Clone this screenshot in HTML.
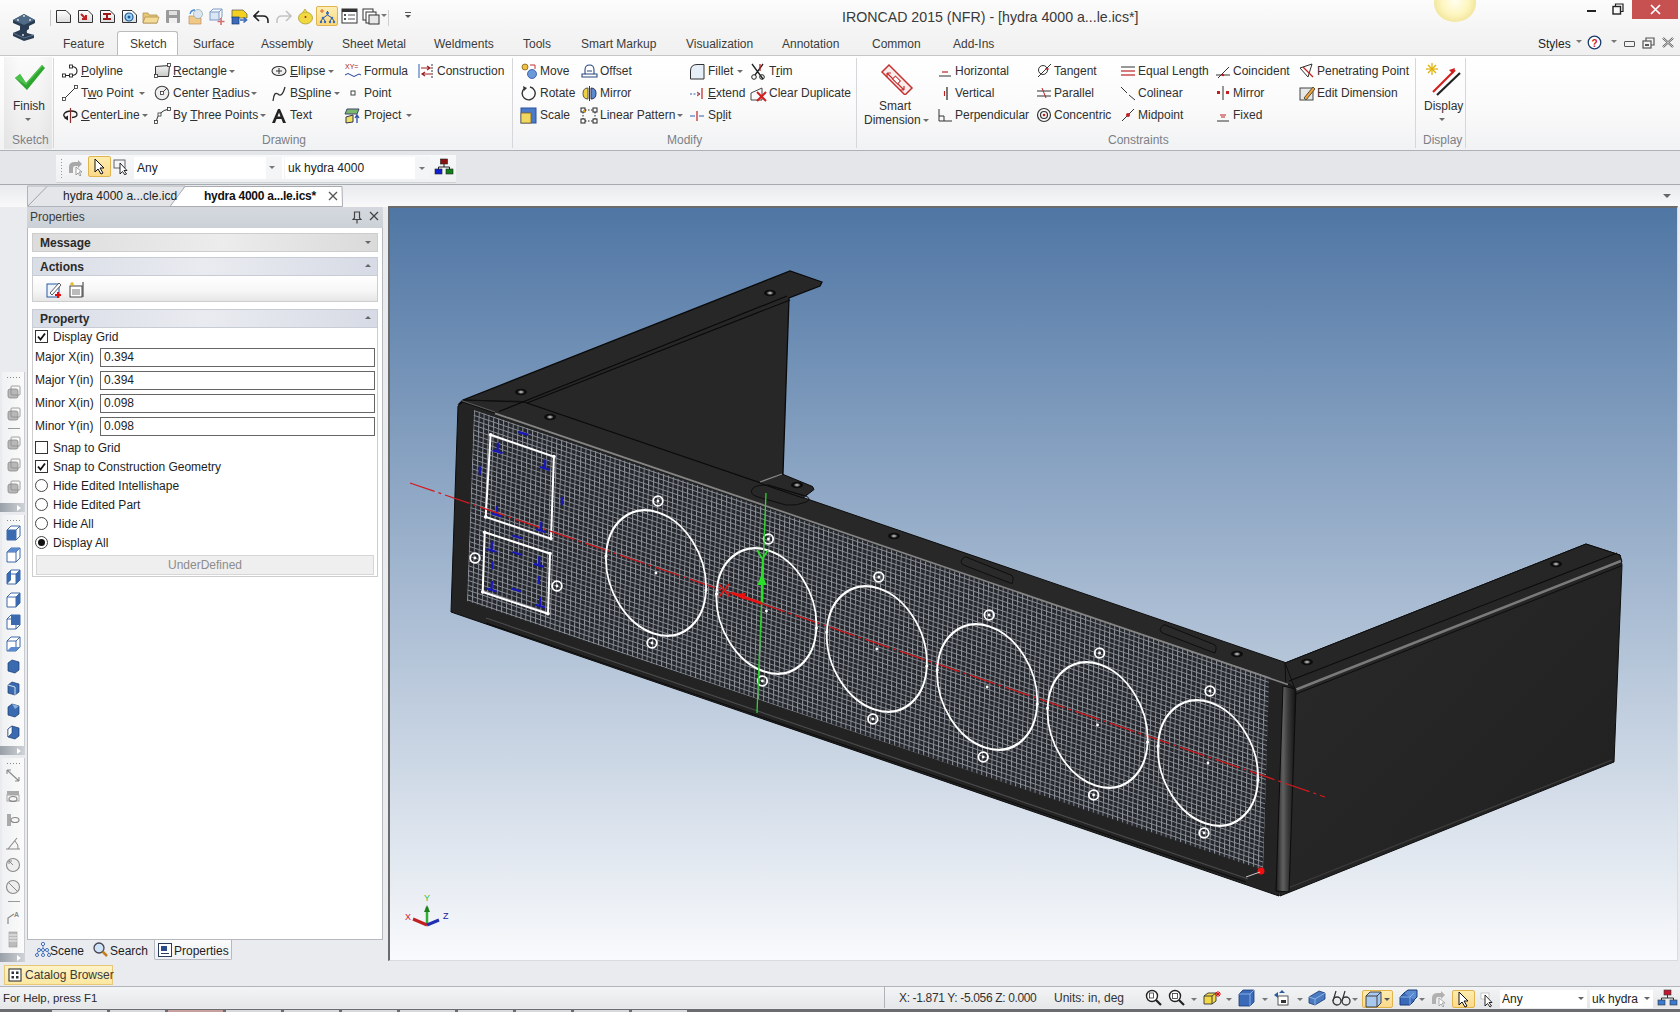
<!DOCTYPE html>
<html><head><meta charset="utf-8">
<style>
*{margin:0;padding:0;box-sizing:border-box}
html,body{width:1680px;height:1012px;overflow:hidden;background:#e9ebee;font-family:"Liberation Sans",sans-serif;font-size:12px;color:#1e1e1e}
.a{position:absolute}
.t{position:absolute;white-space:nowrap;line-height:14px}
#title{left:0;top:0;width:1680px;height:55px;background:linear-gradient(#fcfcfc,#f4f4f4 60%,#f0f0f0)}
#ribbon{left:0;top:55px;width:1680px;height:96px;background:linear-gradient(#ffffff,#fbfbfb 50%,#f1f2f3);border-top:1px solid #c6c6c6;border-bottom:1px solid #aeb2b7}
.tab{top:37px;color:#3b3b3b;font-size:12px}
.rt{font-size:12px;color:#303030}
.gl{top:133px;color:#7b8088;font-size:12px}
.sep{top:58px;width:1px;height:90px;background:#d5d7da}
#tbrow{left:0;top:151px;width:1680px;height:34px;background:#e4e6e9;border-bottom:1px solid #a7abb0}
#docrow{left:0;top:185px;width:1680px;height:22px;background:linear-gradient(#e8eaed,#f9f9fa)}
#vp{left:388px;top:206px;width:1290px;height:755px;border-left:2px solid #6b6b6b;border-top:2px solid #6b6b6b;border-right:1px solid #d8dce0;border-bottom:1px solid #d8dce0;overflow:hidden;background:linear-gradient(#4f76a4 0px,#f9fafc 752px)}
#panel{left:27px;top:207px;width:356px;height:755px;background:#ffffff;border:1px solid #a9adb2}
#status{left:0;top:986px;width:1680px;height:22px;background:linear-gradient(#f3f4f5,#e6e7e9);border-top:1px solid #b2b5b9}
</style></head><body>

<!-- TITLE + TABS -->
<div id="title" class="a"></div>
<div class="t" style="left:842px;top:9px;font-size:14.2px;color:#3a3a3a;line-height:17px">IRONCAD 2015 (NFR) - [hydra 4000 a...le.ics*]</div>

<!-- tabs -->
<div class="a" style="left:117px;top:31px;width:61px;height:25px;background:#fff;border:1px solid #bcbcbc;border-bottom:none;border-radius:3px 3px 0 0"></div>
<div class="t tab" style="left:63px">Feature</div>
<div class="t tab" style="left:130px">Sketch</div>
<div class="t tab" style="left:193px">Surface</div>
<div class="t tab" style="left:261px">Assembly</div>
<div class="t tab" style="left:342px">Sheet Metal</div>
<div class="t tab" style="left:434px">Weldments</div>
<div class="t tab" style="left:523px">Tools</div>
<div class="t tab" style="left:581px">Smart Markup</div>
<div class="t tab" style="left:686px">Visualization</div>
<div class="t tab" style="left:782px">Annotation</div>
<div class="t tab" style="left:872px">Common</div>
<div class="t tab" style="left:953px">Add-Ins</div>
<div class="t tab" style="left:1538px;color:#222">Styles</div>

<!-- RIBBON -->
<div id="ribbon" class="a"></div>
<div class="a" style="left:4px;top:57px;width:48px;height:92px;background:linear-gradient(90deg,rgba(0,0,0,0.03),rgba(0,0,0,0) 30%,rgba(0,0,0,0) 70%,rgba(0,0,0,0.03)),linear-gradient(#fbfbfb,#f1f1f1 60%,#eaeaea)"></div>
<svg class="a" style="left:12px;top:63px" width="34" height="30" viewBox="0 0 34 30"><path d="M3,15 L8,11 L14,20 L30,2 L33,5 L15,27 Z" fill="#2fa52f"/><path d="M3,15 L8,11 L14,20 L30,2 L31,3 L14,22 Z" fill="#4cc24c"/></svg>
<div class="t rt" style="left:13px;top:99px;">Finish</div>
<div class="a" style="left:25px;top:118px;width:0;height:0;border-left:3px solid transparent;border-right:3px solid transparent;border-top:3px solid #6d6d6d"></div>
<div class="t gl" style="left:12px;top:133px;">Sketch</div>
<div class="a sep" style="left:53px"></div>
<svg class="a" style="left:62px;top:63px" width="16" height="16" viewBox="0 0 16 16"><path d="M3,12.5 L9,12.5 Q15,12.5 15,8 Q15,3.5 9,3.5" fill="none" stroke="#222" stroke-width="1.1"/><rect x="0.5" y="11" width="3" height="3" fill="#fff" stroke="#222" stroke-width="0.9"/><rect x="7.5" y="11" width="3" height="3" fill="#fff" stroke="#222" stroke-width="0.9"/><rect x="7.5" y="2" width="3" height="3" fill="#fff" stroke="#222" stroke-width="0.9"/></svg>
<div class="t rt" style="left:81px;top:64px;"><u>P</u>olyline</div>
<svg class="a" style="left:62px;top:85px" width="16" height="16" viewBox="0 0 16 16"><line x1="2" y1="14" x2="14" y2="2" stroke="#333"/><rect x="0.5" y="12.5" width="3" height="3" fill="#fff" stroke="#333" stroke-width="0.8"/><rect x="12.5" y="0.5" width="3" height="3" fill="#fff" stroke="#333" stroke-width="0.8"/></svg>
<div class="t rt" style="left:81px;top:86px;">T<u>w</u>o Point</div>
<div class="a" style="left:139px;top:92px;width:0;height:0;border-left:3px solid transparent;border-right:3px solid transparent;border-top:3px solid #6d6d6d"></div>
<svg class="a" style="left:62px;top:107px" width="16" height="17" viewBox="0 0 16 17"><path d="M4,11 Q1,9 2,7 Q4,4 9,4 Q15,4 15,7.5 Q15,10 10,10.5" fill="none" stroke="#222" stroke-width="1.3"/><line x1="8.5" y1="1" x2="8.5" y2="16" stroke="#8a2a2a" stroke-width="1.2"/><path d="M2,11 L6,8.5 L6,13.5Z" fill="#222"/></svg>
<div class="t rt" style="left:81px;top:108px;"><u>C</u>enterLine</div>
<div class="a" style="left:142px;top:114px;width:0;height:0;border-left:3px solid transparent;border-right:3px solid transparent;border-top:3px solid #6d6d6d"></div>
<svg class="a" style="left:154px;top:63px" width="17" height="16" viewBox="0 0 17 16"><path d="M1.5,3.5 L15.5,2.5 L14.5,13.5 L1.5,13.5Z" fill="url(#rg)" stroke="#333"/><defs><linearGradient id="rg" x1="0" y1="0" x2="0" y2="1"><stop offset="0" stop-color="#f4f4f4"/><stop offset="1" stop-color="#c8c8c8"/></linearGradient></defs><rect x="0.5" y="11.5" width="3" height="3" fill="#fff" stroke="#333" stroke-width="0.8"/><rect x="13.5" y="0.5" width="3" height="3" fill="#fff" stroke="#333" stroke-width="0.8"/></svg>
<div class="t rt" style="left:173px;top:64px;"><u>R</u>ectangle</div>
<div class="a" style="left:229px;top:70px;width:0;height:0;border-left:3px solid transparent;border-right:3px solid transparent;border-top:3px solid #6d6d6d"></div>
<svg class="a" style="left:154px;top:85px" width="16" height="16" viewBox="0 0 16 16"><circle cx="8" cy="8" r="6.8" fill="#eee" stroke="#444" stroke-width="1.1"/><rect x="6.5" y="6.5" width="3" height="3" fill="#fff" stroke="#333" stroke-width="0.8"/><line x1="9" y1="7" x2="13" y2="3" stroke="#444"/></svg>
<div class="t rt" style="left:173px;top:86px;">Center <u>R</u>adius</div>
<div class="a" style="left:251px;top:92px;width:0;height:0;border-left:3px solid transparent;border-right:3px solid transparent;border-top:3px solid #6d6d6d"></div>
<svg class="a" style="left:154px;top:107px" width="17" height="17" viewBox="0 0 17 17"><path d="M2,15 Q4,4 15,2" fill="none" stroke="#333"/><rect x="0.5" y="13.5" width="3" height="3" fill="#fff" stroke="#333" stroke-width="0.8"/><rect x="4" y="6" width="3" height="3" fill="#fff" stroke="#333" stroke-width="0.8"/><rect x="13.5" y="0.5" width="3" height="3" fill="#fff" stroke="#333" stroke-width="0.8"/></svg>
<div class="t rt" style="left:173px;top:108px;">By <u>T</u>hree Points</div>
<div class="a" style="left:260px;top:114px;width:0;height:0;border-left:3px solid transparent;border-right:3px solid transparent;border-top:3px solid #6d6d6d"></div>
<svg class="a" style="left:271px;top:63px" width="17" height="16" viewBox="0 0 17 16"><ellipse cx="8" cy="8" rx="7" ry="4.5" fill="#f2f2f2" stroke="#333" stroke-width="1.1"/><line x1="8" y1="5" x2="8" y2="11" stroke="#333"/><line x1="5" y1="8" x2="11" y2="8" stroke="#333"/></svg>
<div class="t rt" style="left:290px;top:64px;"><u>E</u>llipse</div>
<div class="a" style="left:328px;top:70px;width:0;height:0;border-left:3px solid transparent;border-right:3px solid transparent;border-top:3px solid #6d6d6d"></div>
<svg class="a" style="left:271px;top:85px" width="17" height="17" viewBox="0 0 17 17"><path d="M2,16 Q3,6 7,9 Q11,13 14,2" fill="none" stroke="#333" stroke-width="1.3"/></svg>
<div class="t rt" style="left:290px;top:86px;">B<u>S</u>pline</div>
<div class="a" style="left:334px;top:92px;width:0;height:0;border-left:3px solid transparent;border-right:3px solid transparent;border-top:3px solid #6d6d6d"></div>
<svg class="a" style="left:271px;top:108px" width="16" height="16" viewBox="0 0 16 16"><path d="M1,15 L7,1 L9,1 L15,15 L12,15 L10.5,11 L5.5,11 L4,15Z M6.5,8.5 L9.5,8.5 L8,4.5Z" fill="#222" fill-rule="evenodd"/></svg>
<div class="t rt" style="left:290px;top:108px;">Text</div>
<svg class="a" style="left:344px;top:62px" width="18" height="18" viewBox="0 0 18 18"><text x="1" y="7" font-size="7" font-family="Liberation Sans" fill="#a02020">XY=</text><path d="M1,13 Q4,10 7,13 Q10,16 13,13 Q15,11 17,13" fill="none" stroke="#2040a0" stroke-width="1"/></svg>
<div class="t rt" style="left:364px;top:64px;">Formula</div>
<svg class="a" style="left:350px;top:90px" width="6" height="6" viewBox="0 0 6 6"><rect x="1" y="1" width="4" height="4" fill="#fff" stroke="#444"/></svg>
<div class="t rt" style="left:364px;top:86px;">Point</div>
<svg class="a" style="left:344px;top:107px" width="18" height="17" viewBox="0 0 18 17"><path d="M3,2 L15,2 L13,7 L1,7Z" fill="#7ab870" stroke="#446"/><path d="M2,10 L9,8 L9,15 L2,16Z" fill="#f0e060" stroke="#335"/><path d="M13,16 L13,9 M11,11 L13,8 L15,11" fill="none" stroke="#2a50a8" stroke-width="1.3"/></svg>
<div class="t rt" style="left:364px;top:108px;">Project</div>
<div class="a" style="left:406px;top:114px;width:0;height:0;border-left:3px solid transparent;border-right:3px solid transparent;border-top:3px solid #6d6d6d"></div>
<svg class="a" style="left:418px;top:63px" width="16" height="16" viewBox="0 0 16 16"><line x1="1" y1="1" x2="1" y2="15" stroke="#3060b0"/><line x1="14" y1="1" x2="14" y2="15" stroke="#333" stroke-dasharray="2,1"/><path d="M3,5 L12,5 M9,3 L12,5 L9,7" fill="none" stroke="#a02020" stroke-width="1.2"/><path d="M13,11 L4,11 M7,9 L4,11 L7,13" fill="none" stroke="#a02020" stroke-width="1.2"/></svg>
<div class="t rt" style="left:437px;top:64px;">Construction</div>
<div class="t gl" style="left:262px;top:133px;">Drawing</div>
<div class="a sep" style="left:512px"></div>
<svg class="a" style="left:521px;top:63px" width="17" height="17" viewBox="0 0 17 17"><circle cx="4" cy="4" r="3" fill="#f0c040" stroke="#806020" stroke-width="0.8"/><circle cx="11" cy="11" r="4.5" fill="#6a9ad8" stroke="#2a50a0" stroke-width="0.8"/><path d="M9,2 L14,2 L14,6" fill="none" stroke="#c03030" stroke-width="1"/></svg>
<div class="t rt" style="left:540px;top:64px;">Move</div>
<svg class="a" style="left:521px;top:85px" width="16" height="16" viewBox="0 0 16 16"><path d="M4,3 A6.5,6.5 0 1 0 9,2" fill="none" stroke="#333" stroke-width="1.4"/><path d="M2,1 L6,3 L3,6Z" fill="#333"/></svg>
<div class="t rt" style="left:540px;top:86px;">Rotate</div>
<svg class="a" style="left:520px;top:107px" width="17" height="17" viewBox="0 0 17 17"><rect x="1" y="1" width="15" height="15" fill="#4a7ac8" stroke="#2a50a0"/><rect x="1" y="6" width="10" height="10" fill="#f0d860" stroke="#806020" stroke-width="0.8"/></svg>
<div class="t rt" style="left:540px;top:108px;">Scale</div>
<svg class="a" style="left:581px;top:63px" width="17" height="16" viewBox="0 0 17 16"><path d="M1,14 L16,14 L16,11 L13,11 L13,7 Q13,2 8.5,2 Q4,2 4,7 L4,11 L1,11Z" fill="none" stroke="#2a4a80" stroke-width="1.1"/><path d="M4,11 L13,11 M6,8 L11,8" stroke="#2a4a80"/></svg>
<div class="t rt" style="left:600px;top:64px;">Offset</div>
<svg class="a" style="left:581px;top:85px" width="17" height="17" viewBox="0 0 17 17"><path d="M7,3 Q2,3 2,8.5 Q2,14 7,14Z" fill="#f0d040" stroke="#554"/><path d="M10,3 Q15,3 15,8.5 Q15,14 10,14Z" fill="#5a8ad0" stroke="#335"/><line x1="8.5" y1="1" x2="8.5" y2="16" stroke="#333"/></svg>
<div class="t rt" style="left:600px;top:86px;">Mirror</div>
<svg class="a" style="left:580px;top:107px" width="18" height="17" viewBox="0 0 18 17"><rect x="1" y="1" width="4" height="4" fill="#fff" stroke="#222"/><rect x="13" y="1" width="4" height="4" fill="#fff" stroke="#222"/><rect x="1" y="12" width="4" height="4" fill="#fff" stroke="#222"/><rect x="13" y="12" width="4" height="4" fill="#fff" stroke="#222"/><path d="M5,3 L13,3 M5,14 L13,14 M3,5 L3,12 M15,5 L15,12" stroke="#222" stroke-dasharray="1.5,1.5"/><rect x="3" y="3" width="2" height="2" fill="#e0a000"/></svg>
<div class="t rt" style="left:600px;top:108px;">Linear Pattern</div>
<div class="a" style="left:677px;top:114px;width:0;height:0;border-left:3px solid transparent;border-right:3px solid transparent;border-top:3px solid #6d6d6d"></div>
<svg class="a" style="left:689px;top:63px" width="16" height="17" viewBox="0 0 16 17"><path d="M1.5,16 L1.5,8 Q1.5,1.5 8,1.5 L15,1.5 L15,16Z" fill="#e6eef8" stroke="#333"/></svg>
<div class="t rt" style="left:708px;top:64px;">Fillet</div>
<div class="a" style="left:737px;top:70px;width:0;height:0;border-left:3px solid transparent;border-right:3px solid transparent;border-top:3px solid #6d6d6d"></div>
<svg class="a" style="left:689px;top:87px" width="16" height="12" viewBox="0 0 16 12"><path d="M1,7 L10,7" stroke="#3060b0" stroke-dasharray="2,1.5"/><path d="M8,5 L11,7 L8,9" fill="none" stroke="#c02020"/><line x1="13" y1="1" x2="13" y2="12" stroke="#c02020" stroke-width="1.2"/></svg>
<div class="t rt" style="left:708px;top:86px;"><u>E</u>xtend</div>
<svg class="a" style="left:689px;top:109px" width="16" height="12" viewBox="0 0 16 12"><path d="M1,7 L6,7 M10,7 L15,7" stroke="#3060b0"/><line x1="8" y1="2" x2="8" y2="12" stroke="#c02020" stroke-width="1.2"/></svg>
<div class="t rt" style="left:708px;top:108px;">Sp<u>l</u>it</div>
<svg class="a" style="left:750px;top:63px" width="17" height="17" viewBox="0 0 17 17"><path d="M2,1 L13,16 M13,1 L5,12" stroke="#222" stroke-width="1.3"/><circle cx="4" cy="14" r="2.3" fill="none" stroke="#222"/><circle cx="12" cy="14" r="2.3" fill="none" stroke="#222"/><line x1="10" y1="1" x2="10" y2="8" stroke="#c02020" stroke-width="1.3"/></svg>
<div class="t rt" style="left:769px;top:64px;">T<u>r</u>im</div>
<svg class="a" style="left:750px;top:85px" width="18" height="17" viewBox="0 0 18 17"><path d="M1,8 L12,3 L12,15 L1,15Z" fill="none" stroke="#444"/><path d="M7,7 L16,16 M16,7 L7,16" stroke="#d02020" stroke-width="2"/></svg>
<div class="t rt" style="left:769px;top:86px;">Clear Duplicate</div>
<div class="t gl" style="left:667px;top:133px;">Modify</div>
<div class="a sep" style="left:856px"></div>
<svg class="a" style="left:880px;top:63px" width="34" height="32" viewBox="0 0 34 32"><path d="M2,9 L9,2 L32,25 L25,32Z" fill="#fbecec" stroke="#c43030" stroke-width="1.5"/><path d="M7,10 L24,27 M7,10 L7,14 M7,10 L11,10 M24,27 L20,27 M24,27 L24,23" stroke="#c43030" stroke-width="1.2" fill="none"/><rect x="13" y="15" width="7" height="4" fill="#fff" stroke="#c43030" transform="rotate(45 16.5 17)"/></svg>
<div class="t rt" style="left:879px;top:99px;">Smart</div>
<div class="t rt" style="left:864px;top:113px;">Dimension</div>
<div class="a" style="left:923px;top:119px;width:0;height:0;border-left:3px solid transparent;border-right:3px solid transparent;border-top:3px solid #6d6d6d"></div>
<svg class="a" style="left:937px;top:63px" width="17" height="17" viewBox="0 0 17 17"><line x1="2" y1="13" x2="14" y2="13" stroke="#333"/><line x1="5" y1="9" x2="11" y2="9" stroke="#c02020" stroke-width="1.2"/></svg>
<div class="t rt" style="left:955px;top:64px;">Horizontal</div>
<svg class="a" style="left:937px;top:85px" width="17" height="17" viewBox="0 0 17 17"><line x1="10" y1="2" x2="10" y2="15" stroke="#222" stroke-width="1.2"/><line x1="7.5" y1="6" x2="7.5" y2="11" stroke="#c02020" stroke-width="1.1"/></svg>
<div class="t rt" style="left:955px;top:86px;">Vertical</div>
<svg class="a" style="left:937px;top:107px" width="17" height="17" viewBox="0 0 17 17"><path d="M2,2 L2,14 L15,14" fill="none" stroke="#333"/><path d="M2,9 L7,9 L7,14" fill="none" stroke="#333"/></svg>
<div class="t rt" style="left:955px;top:108px;">Perpendicular</div>
<svg class="a" style="left:1036px;top:63px" width="17" height="17" viewBox="0 0 17 17"><circle cx="7" cy="7" r="4.5" fill="none" stroke="#333"/><line x1="2" y1="14" x2="15" y2="1" stroke="#333"/><line x1="9" y1="6" x2="13" y2="6" stroke="#c02020"/></svg>
<div class="t rt" style="left:1054px;top:64px;">Tangent</div>
<svg class="a" style="left:1036px;top:85px" width="17" height="17" viewBox="0 0 17 17"><line x1="1" y1="6" x2="15" y2="6" stroke="#333"/><line x1="1" y1="11" x2="15" y2="11" stroke="#333"/><path d="M6,3 L10,13" stroke="#c02020"/></svg>
<div class="t rt" style="left:1054px;top:86px;">Parallel</div>
<svg class="a" style="left:1036px;top:107px" width="17" height="17" viewBox="0 0 17 17"><circle cx="8" cy="8" r="6.5" fill="none" stroke="#333" stroke-width="1.2"/><circle cx="8" cy="8" r="3.5" fill="none" stroke="#333" stroke-width="1.2"/><circle cx="8" cy="8" r="1.3" fill="#c02020"/></svg>
<div class="t rt" style="left:1054px;top:108px;">Concentric</div>
<svg class="a" style="left:1120px;top:63px" width="17" height="17" viewBox="0 0 17 17"><line x1="1" y1="4" x2="15" y2="4" stroke="#333"/><line x1="1" y1="8" x2="15" y2="8" stroke="#c02020" stroke-width="1.2"/><line x1="1" y1="12" x2="15" y2="12" stroke="#c02020" stroke-width="1.2"/></svg>
<div class="t rt" style="left:1138px;top:64px;">Equal Length</div>
<svg class="a" style="left:1120px;top:85px" width="17" height="17" viewBox="0 0 17 17"><line x1="1" y1="2" x2="7" y2="8" stroke="#333"/><line x1="9" y1="10" x2="15" y2="15" stroke="#333"/></svg>
<div class="t rt" style="left:1138px;top:86px;">Colinear</div>
<svg class="a" style="left:1120px;top:107px" width="17" height="17" viewBox="0 0 17 17"><line x1="2" y1="14" x2="14" y2="2" stroke="#333"/><circle cx="8" cy="8" r="2" fill="#c02020"/></svg>
<div class="t rt" style="left:1138px;top:108px;">Midpoint</div>
<svg class="a" style="left:1215px;top:63px" width="17" height="17" viewBox="0 0 17 17"><line x1="1" y1="12" x2="15" y2="12" stroke="#333"/><line x1="3" y1="15" x2="14" y2="4" stroke="#333"/><circle cx="8" cy="12" r="1.3" fill="#c02020"/></svg>
<div class="t rt" style="left:1233px;top:64px;">Coincident</div>
<svg class="a" style="left:1215px;top:85px" width="17" height="17" viewBox="0 0 17 17"><line x1="8" y1="1" x2="8" y2="15" stroke="#333"/><rect x="2" y="6" width="3" height="3" fill="#c02020"/><rect x="11" y="6" width="3" height="3" fill="#c02020"/></svg>
<div class="t rt" style="left:1233px;top:86px;">Mirror</div>
<svg class="a" style="left:1215px;top:107px" width="17" height="17" viewBox="0 0 17 17"><line x1="2" y1="14" x2="14" y2="14" stroke="#333"/><path d="M5,8 L11,8 M6,10 L10,10" stroke="#c02020"/></svg>
<div class="t rt" style="left:1233px;top:108px;">Fixed</div>
<svg class="a" style="left:1299px;top:63px" width="17" height="17" viewBox="0 0 17 17"><path d="M1,5 L13,1 L9,14Z" fill="none" stroke="#333"/><path d="M4,4 L14,14" stroke="#c02020" stroke-width="1.2"/></svg>
<div class="t rt" style="left:1317px;top:64px;">Penetrating Point</div>
<svg class="a" style="left:1299px;top:85px" width="17" height="17" viewBox="0 0 17 17"><rect x="1" y="3" width="13" height="12" fill="#e8e8e8" stroke="#444"/><path d="M5,13 L14,2 L16,4 L7,15Z" fill="#f0a040" stroke="#553"/></svg>
<div class="t rt" style="left:1317px;top:86px;">Edit Dimension</div>
<div class="t gl" style="left:1108px;top:133px;">Constraints</div>
<div class="a sep" style="left:1415px"></div>
<svg class="a" style="left:1425px;top:62px" width="38" height="36" viewBox="0 0 38 36"><g stroke="#e0b000" stroke-width="1.2"><line x1="7" y1="1" x2="7" y2="13"/><line x1="1" y1="7" x2="13" y2="7"/><line x1="3" y1="3" x2="11" y2="11"/><line x1="11" y1="3" x2="3" y2="11"/></g><line x1="8" y1="30" x2="30" y2="8" stroke="#d02020" stroke-width="2.2"/><line x1="12" y1="33" x2="35" y2="11" stroke="#222" stroke-width="2.2"/><path d="M30,6 L24,8 L28,12Z" fill="#d02020"/></svg>
<div class="t rt" style="left:1424px;top:99px;">Display</div>
<div class="a" style="left:1439px;top:118px;width:0;height:0;border-left:3px solid transparent;border-right:3px solid transparent;border-top:3px solid #6d6d6d"></div>
<div class="t gl" style="left:1423px;top:133px;">Display</div>
<div class="a sep" style="left:1465px"></div>

<!-- TOOLBAR ROW -->
<div id="tbrow" class="a"></div>
<div id="docrow" class="a"></div>

<div class="a" style="left:1434px;top:-16px;width:42px;height:38px;border-radius:50%;background:radial-gradient(circle at 50% 45%,#fffef0 0%,#fdf6c0 45%,#f3e7a0 70%,rgba(245,240,200,0) 100%)"></div>
<svg class="a" style="left:10px;top:11px" width="28" height="30" viewBox="0 0 28 30"><path d="M3,9 L14,3 L25,9 L25,12 L19,15 L19,18 Q16,19 17,22 L24,24 L24,27 L14,30 L3,25 L3,22 L10,19 L10,15 L3,12Z" fill="#2b3d52"/><path d="M3,9 L14,3 L25,9 L14,14Z" fill="#4f6a86"/><circle cx="14" cy="5" r="1" fill="#ddd"/><circle cx="8" cy="9" r="1" fill="#ddd"/><circle cx="20" cy="9" r="1" fill="#ddd"/><circle cx="13" cy="24" r="1" fill="#ddd"/><path d="M3,22 L14,27 L24,24" fill="none" stroke="#5a7590" stroke-width="1"/></svg>
<div class="a" style="left:50px;top:10px;width:1px;height:16px;background:#c8c8c8"></div>
<svg class="a" style="left:55px;top:9px" width="17" height="15" viewBox="0 0 17 15"><path d="M1.5,1.5 L11,1.5 L15.5,6 L15.5,13.5 L1.5,13.5Z" fill="url(#dg)" stroke="#333" stroke-width="1"/><defs><linearGradient id="dg" x1="0" y1="0" x2="0" y2="1"><stop offset="0" stop-color="#fff"/><stop offset="1" stop-color="#dcdcdc"/></linearGradient></defs></svg>
<svg class="a" style="left:77px;top:9px" width="17" height="15" viewBox="0 0 17 15"><path d="M1.5,1.5 L11,1.5 L15.5,6 L15.5,13.5 L1.5,13.5Z" fill="url(#dg2)" stroke="#333" stroke-width="1"/><defs><linearGradient id="dg2" x1="0" y1="0" x2="0" y2="1"><stop offset="0" stop-color="#fff"/><stop offset="1" stop-color="#dcdcdc"/></linearGradient></defs><path d="M4,5 L9,10 M9,6 L9,10 L5,10" stroke="#c02020" stroke-width="2" fill="none"/></svg>
<svg class="a" style="left:99px;top:9px" width="17" height="15" viewBox="0 0 17 15"><path d="M1.5,1.5 L11,1.5 L15.5,6 L15.5,13.5 L1.5,13.5Z" fill="url(#dg3)" stroke="#333" stroke-width="1"/><defs><linearGradient id="dg3" x1="0" y1="0" x2="0" y2="1"><stop offset="0" stop-color="#fff"/><stop offset="1" stop-color="#dcdcdc"/></linearGradient></defs><path d="M4,4 L12,4 L12,6 L9,6 L9,9 L12,9 L12,11 L4,11 L4,9 L7,9 L7,6 L4,6Z" fill="#a01818"/></svg>
<svg class="a" style="left:121px;top:9px" width="17" height="15" viewBox="0 0 17 15"><path d="M1.5,1.5 L11,1.5 L15.5,6 L15.5,13.5 L1.5,13.5Z" fill="url(#dg4)" stroke="#333" stroke-width="1"/><defs><linearGradient id="dg4" x1="0" y1="0" x2="0" y2="1"><stop offset="0" stop-color="#fff"/><stop offset="1" stop-color="#dcdcdc"/></linearGradient></defs><circle cx="8" cy="8" r="4" fill="#9fd0f0" stroke="#1a5a9a" stroke-width="1.2"/><circle cx="8" cy="8" r="1.5" fill="#1a5a9a"/></svg>
<svg class="a" style="left:142px;top:10px" width="18" height="14" viewBox="0 0 18 14"><path d="M1,3 L6,3 L7,5 L15,5 L15,13 L1,13Z" fill="#e8c878" stroke="#b09050" stroke-width="0.8"/><path d="M3,7 L17,7 L15,13 L1,13Z" fill="#f4dc98" stroke="#b09050" stroke-width="0.8"/></svg>
<svg class="a" style="left:165px;top:9px" width="16" height="15" viewBox="0 0 16 15"><rect x="1" y="1" width="14" height="13" rx="1" fill="#9a9a9a"/><rect x="4" y="2" width="8" height="4" fill="#e0e0e0"/><rect x="4" y="9" width="8" height="5" fill="#f0f0f0"/></svg>
<svg class="a" style="left:187px;top:8px" width="17" height="17" viewBox="0 0 17 17"><path d="M2,8 L8,8 L9,10 L14,10 L14,16 L2,16Z" fill="#f0c888" stroke="#c09060" stroke-width="0.7"/><circle cx="11" cy="6" r="4.5" fill="#dde6f0" stroke="#8aa" stroke-width="0.7"/><path d="M3,6 Q4,2 8,2" fill="none" stroke="#4a8ad0" stroke-width="1.3"/></svg>
<svg class="a" style="left:208px;top:8px" width="18" height="17" viewBox="0 0 18 17"><rect x="2" y="4" width="9" height="8" fill="#dbe6f4" stroke="#7a9ac8"/><path d="M2,4 L5,1 L14,1 L11,4 M11,12 L14,9 L14,1" fill="none" stroke="#7a9ac8"/><path d="M13,10 L13,17 M9.5,13.5 L16.5,13.5" stroke="#d07070" stroke-width="1.6"/></svg>
<svg class="a" style="left:231px;top:8px" width="18" height="17" viewBox="0 0 18 17"><path d="M1,2 L12,2 L16,6 L16,10 L1,10Z" fill="#f4d020" stroke="#555" stroke-width="0.7"/><rect x="1" y="9" width="7" height="7" fill="#3a6ab8" stroke="#1a3a78" stroke-width="0.7"/><path d="M9,12 L15,12 M12.5,9.5 L15.5,12 L12.5,14.5" stroke="#3a6ab8" stroke-width="1.6" fill="none"/></svg>
<svg class="a" style="left:253px;top:9px" width="17" height="15" viewBox="0 0 17 15"><path d="M6,2 L1,7 L6,12 M1,7 L10,7 Q15,7 15,12 L15,14" fill="none" stroke="#222" stroke-width="1.6"/></svg>
<svg class="a" style="left:275px;top:9px" width="17" height="15" viewBox="0 0 17 15"><path d="M11,2 L16,7 L11,12 M16,7 L7,7 Q2,7 2,12 L2,14" fill="none" stroke="#c4c4c4" stroke-width="1.6"/></svg>
<svg class="a" style="left:297px;top:8px" width="17" height="17" viewBox="0 0 17 17"><ellipse cx="8.5" cy="10" rx="7" ry="6" fill="#f0d840" stroke="#a09020" stroke-width="0.7"/><circle cx="8.5" cy="9" r="1" fill="#a02020"/><path d="M6,4 L8,1 L10,4" fill="#f0d840" stroke="#a09020" stroke-width="0.6"/></svg>
<div class="a" style="left:316px;top:6px;width:22px;height:20px;background:linear-gradient(#fdeeb6,#fbd87a);border:1px solid #e2b44d;border-radius:2px"></div>
<svg class="a" style="left:319px;top:8px" width="17" height="16" viewBox="0 0 17 16"><path d="M8.5,3 L8.5,7 M4,10 L8.5,7 L13,10 M4,10 L2,13 M4,10 L6,13 M13,10 L11,13 M13,10 L15,13" stroke="#2a5aa8" fill="none"/><circle cx="8.5" cy="5" r="1.5" fill="#3a6ab8"/><circle cx="4" cy="10" r="1.3" fill="#3a6ab8"/><circle cx="13" cy="10" r="1.3" fill="#3a6ab8"/><circle cx="2" cy="14" r="1.2" fill="#3a6ab8"/><circle cx="6" cy="14" r="1.2" fill="#3a6ab8"/><circle cx="11" cy="14" r="1.2" fill="#3a6ab8"/><circle cx="15" cy="14" r="1.2" fill="#3a6ab8"/><path d="M3,1 L3,5 M1,3 L5,3" stroke="#e06020"/></svg>
<svg class="a" style="left:341px;top:8px" width="17" height="16" viewBox="0 0 17 16"><rect x="1" y="1" width="15" height="14" fill="#fff" stroke="#333"/><rect x="1" y="1" width="15" height="3" fill="#333"/><rect x="3" y="6" width="2" height="2" fill="#555"/><rect x="3" y="10" width="2" height="2" fill="#555"/><path d="M7,7 L14,7 M7,11 L14,11" stroke="#555"/></svg>
<svg class="a" style="left:362px;top:8px" width="18" height="17" viewBox="0 0 18 17"><rect x="1" y="1" width="10" height="11" fill="#fff" stroke="#333"/><rect x="4" y="4" width="10" height="11" fill="#fff" stroke="#333"/><rect x="7" y="7" width="10" height="9" fill="#e8e8e8" stroke="#333"/></svg>
<div class="a" style="left:381px;top:14px;width:0;height:0;border-left:3px solid transparent;border-right:3px solid transparent;border-top:3px solid #777"></div>
<div class="a" style="left:388px;top:10px;width:1px;height:16px;background:#cfcfcf"></div>
<div class="a" style="left:405px;top:12px;width:6px;height:1px;background:#555"></div>
<div class="a" style="left:405px;top:15px;width:0;height:0;border-left:3px solid transparent;border-right:3px solid transparent;border-top:3px solid #555"></div>
<div class="a" style="left:1587px;top:10px;width:9px;height:2px;background:#222"></div>
<svg class="a" style="left:1612px;top:3px" width="12" height="12" viewBox="0 0 12 12"><rect x="1" y="3.5" width="7.5" height="7.5" fill="none" stroke="#222" stroke-width="1.4"/><path d="M3.5,3.5 L3.5,1 L11,1 L11,8.5 L8.5,8.5" fill="none" stroke="#222" stroke-width="1.2"/></svg>
<div class="a" style="left:1632px;top:0;width:46px;height:19px;background:#c75050"></div>
<svg class="a" style="left:1650px;top:4px" width="11" height="11" viewBox="0 0 11 11"><path d="M1,1 L10,10 M10,1 L1,10" stroke="#fff" stroke-width="1.7"/></svg>
<div class="a" style="left:1576px;top:40px;width:0;height:0;border-left:3px solid transparent;border-right:3px solid transparent;border-top:3px solid #777"></div>
<svg class="a" style="left:1587px;top:35px" width="15" height="15" viewBox="0 0 15 15"><circle cx="7.5" cy="7.5" r="6.3" fill="#fff" stroke="#1a3a6a" stroke-width="1.3"/><text x="7.5" y="11.5" text-anchor="middle" font-family="Liberation Sans" font-weight="bold" font-size="10" fill="#d01818">?</text></svg>
<div class="a" style="left:1611px;top:40px;width:0;height:0;border-left:3px solid transparent;border-right:3px solid transparent;border-top:3px solid #777"></div>
<div class="a" style="left:1624px;top:41px;width:11px;height:6px;border:1.3px solid #555;border-radius:1px"></div>
<svg class="a" style="left:1642px;top:37px" width="13" height="12" viewBox="0 0 13 12"><rect x="1" y="4" width="8" height="7" fill="none" stroke="#555" stroke-width="1.2"/><path d="M4,4 L4,1 L12,1 L12,8 L9,8" fill="none" stroke="#555" stroke-width="1.2"/><rect x="3" y="7" width="4" height="2" fill="#555"/></svg>
<svg class="a" style="left:1662px;top:37px" width="12" height="11" viewBox="0 0 12 11"><path d="M1,1 L11,10 M11,1 L1,10" stroke="#555" stroke-width="2.2"/><path d="M1,1 L11,10 M11,1 L1,10" stroke="#fff" stroke-width="0.8"/></svg>
<div class="a" style="left:56px;top:155px;width:400px;height:28px;background:linear-gradient(#f7f8f9,#eef0f2);border-bottom:1px solid #d0d3d6"></div>
<div class="a" style="left:61px;top:159px;width:1px;height:1px;background:#999"></div>
<div class="a" style="left:61px;top:162px;width:1px;height:1px;background:#999"></div>
<div class="a" style="left:61px;top:165px;width:1px;height:1px;background:#999"></div>
<div class="a" style="left:61px;top:168px;width:1px;height:1px;background:#999"></div>
<div class="a" style="left:61px;top:171px;width:1px;height:1px;background:#999"></div>
<div class="a" style="left:61px;top:174px;width:1px;height:1px;background:#999"></div>
<div class="a" style="left:61px;top:177px;width:1px;height:1px;background:#999"></div>
<svg class="a" style="left:67px;top:159px" width="18" height="17" viewBox="0 0 18 17"><path d="M2,8 Q2,3 8,3 L11,3 L11,1 L15,5 L11,9 L11,7 L8,7 Q6,7 6,10 L6,14 L2,14Z" fill="#a8a8a8"/><path d="M9,8 L9,16 L11,14 L13,17 L14,16 L12,13 L15,13Z" fill="#fff" stroke="#888" stroke-width="0.8"/></svg>
<div class="a" style="left:88px;top:156px;width:23px;height:21px;background:linear-gradient(#fdecb0,#fbd98a);border:1px solid #e2b44d;border-radius:2px"></div>
<svg class="a" style="left:93px;top:158px" width="14" height="17" viewBox="0 0 14 17"><path d="M2,1 L2,14 L5,11 L8,16 L10,15 L7,10 L11,10Z" fill="#fff" stroke="#111" stroke-width="1"/></svg>
<svg class="a" style="left:113px;top:158px" width="18" height="17" viewBox="0 0 18 17"><rect x="1" y="2" width="11" height="8" fill="#f4f4f4" stroke="#555" stroke-width="0.9"/><path d="M7,5 L7,16 L9.5,13.5 L12,17 L13.5,16 L11,12.5 L14,12.5Z" fill="#fff" stroke="#111" stroke-width="0.9"/></svg>
<div class="a" style="left:134px;top:157px;width:150px;height:22px;background:#fff"></div>
<div class="a" style="left:266px;top:157px;width:16px;height:22px;background:#f4f5f6"></div>
<div class="t" style="left:137px;top:161px;font-size:12px;color:#222">Any</div>
<div class="a" style="left:269px;top:166px;width:0;height:0;border-left:3px solid transparent;border-right:3px solid transparent;border-top:3px solid #777"></div>
<div class="a" style="left:285px;top:157px;width:145px;height:22px;background:#fff"></div>
<div class="a" style="left:415px;top:157px;width:15px;height:22px;background:#f4f5f6"></div>
<div class="t" style="left:288px;top:161px;font-size:12px;color:#222">uk hydra 4000</div>
<div class="a" style="left:419px;top:167px;width:0;height:0;border-left:3px solid transparent;border-right:3px solid transparent;border-top:3px solid #777"></div>
<svg class="a" style="left:434px;top:158px" width="20" height="18" viewBox="0 0 20 18"><rect x="6.5" y="1" width="7" height="5" fill="#8a1010" stroke="#222" stroke-width="0.6"/><path d="M10,6 L10,9 M4.5,9 L15.5,9 M4.5,9 L4.5,11 M15.5,9 L15.5,11" stroke="#222"/><rect x="1" y="11" width="7" height="5" fill="#1020d0" stroke="#222" stroke-width="0.6"/><rect x="12" y="11" width="7" height="5" fill="#10801a" stroke="#222" stroke-width="0.6"/></svg>
<svg class="a" style="left:27px;top:185px" width="320" height="22" viewBox="0 0 320 22"><path d="M0.5,21.5 L0.5,1 L158,1 L145,21.5Z" fill="#e4e6ea" stroke="#b0b3b8" stroke-width="1"/><path d="M143,21.5 L158,1.5 L315,1.5 L315.5,21.5Z" fill="#ffffff" stroke="#a9adb2" stroke-width="1"/><path d="M1,21 L20,1.5" stroke="#a0a4aa" stroke-width="1"/></svg>
<div class="t" style="left:63px;top:189px;font-size:12px;color:#222">hydra 4000 a...cle.icd</div>
<div class="t" style="left:204px;top:189px;font-size:12px;color:#111;font-weight:bold;letter-spacing:-0.25px">hydra 4000 a...le.ics*</div>
<svg class="a" style="left:328px;top:191px" width="10" height="10" viewBox="0 0 10 10"><path d="M1,1 L9,9 M9,1 L1,9" stroke="#555" stroke-width="1.3"/></svg>
<div class="a" style="left:1663px;top:194px;width:0;height:0;border-left:4px solid transparent;border-right:4px solid transparent;border-top:4px solid #666"></div>
<!-- PANEL -->
<div class="a" style="left:27px;top:207px;width:356px;height:21px;background:linear-gradient(#d5d9df,#ccd1d8);"></div>
<div class="t" style="left:30px;top:210px;color:#3c3c3c;font-size:12px">Properties</div>
<svg class="a" style="left:352px;top:211px" width="10" height="13" viewBox="0 0 10 13"><path d="M2.5,1 L7.5,1 L7.5,7 L9,8.5 L1,8.5 L2.5,7Z M5,8.5 L5,12.5" fill="none" stroke="#444" stroke-width="1.2"/></svg>
<svg class="a" style="left:369px;top:211px" width="10" height="10" viewBox="0 0 10 10"><path d="M1,1 L9,9 M9,1 L1,9" stroke="#444" stroke-width="1.3"/></svg>
<div class="a" style="left:27px;top:228px;width:356px;height:712px;background:#fff;border:1px solid #b6babf;border-top:none"></div>
<div class="a" style="left:32px;top:233px;width:346px;height:19px;background:linear-gradient(90deg,#dcdcdc,#ececec 55%,#dadada);border:1px solid #cdcdcd"></div>
<div class="t" style="left:40px;top:236px;font-weight:bold;color:#2a2a2a">Message</div>
<div class="a" style="left:365px;top:241px;width:0;height:0;border-left:3px solid transparent;border-right:3px solid transparent;border-top:3px solid #666"></div>
<div class="a" style="left:32px;top:257px;width:346px;height:19px;background:linear-gradient(90deg,#d9dde6,#e9ebf0 50%,#d7dbe5);border:1px solid #c8ccd4"></div>
<div class="t" style="left:40px;top:260px;font-weight:bold;color:#2a2a2a;font-size:12px">Actions</div>
<div class="a" style="left:365px;top:264px;width:0;height:0;border-left:3px solid transparent;border-right:3px solid transparent;border-bottom:3px solid #666"></div>
<div class="a" style="left:32px;top:276px;width:346px;height:26px;background:linear-gradient(#fff,#f6f6f6 60%,#e6e6e6);border:1px solid #cdcdcd;border-top:none"></div>
<svg class="a" style="left:46px;top:281px" width="17" height="17" viewBox="0 0 17 17"><rect x="1" y="3" width="12" height="13" fill="#eef4fb" stroke="#2a5aa0" stroke-width="1"/><path d="M4,12 L13,2 L15,4 L6,14Z" fill="#fff" stroke="#333" stroke-width="0.8"/><path d="M12,11 L12,17 M9,14 L15,14" stroke="#e01010" stroke-width="2"/></svg>
<svg class="a" style="left:68px;top:281px" width="16" height="17" viewBox="0 0 16 17"><rect x="2" y="5" width="12" height="11" fill="#fff" stroke="#333" stroke-width="0.9"/><rect x="4" y="8" width="8" height="6" fill="#bbb"/><path d="M4,1 L4,5 M2,3 L6,3" stroke="#e0b000" stroke-width="1.2"/><line x1="15" y1="1" x2="15" y2="16" stroke="#333"/></svg>
<div class="a" style="left:32px;top:309px;width:346px;height:19px;background:linear-gradient(90deg,#d9dde6,#e9ebf0 50%,#d7dbe5);border:1px solid #c8ccd4"></div>
<div class="t" style="left:40px;top:312px;font-weight:bold;color:#2a2a2a;font-size:12px">Property</div>
<div class="a" style="left:365px;top:316px;width:0;height:0;border-left:3px solid transparent;border-right:3px solid transparent;border-bottom:3px solid #666"></div>
<div class="a" style="left:35px;top:330px;width:13px;height:13px;background:#fff;border:1px solid #333"></div>
<svg class="a" style="left:37px;top:332px" width="9" height="9" viewBox="0 0 9 9"><path d="M1,4.5 L3.5,7.5 L8,1.5" fill="none" stroke="#111" stroke-width="1.8"/></svg>
<div class="t" style="left:53px;top:330px;">Display Grid</div>
<div class="t" style="left:35px;top:350px;">Major X(in)</div>
<div class="a" style="left:100px;top:348px;width:275px;height:19px;background:#fff;border:1px solid #666"></div>
<div class="t" style="left:104px;top:350px;">0.394</div>
<div class="t" style="left:35px;top:373px;">Major Y(in)</div>
<div class="a" style="left:100px;top:371px;width:275px;height:19px;background:#fff;border:1px solid #666"></div>
<div class="t" style="left:104px;top:373px;">0.394</div>
<div class="t" style="left:35px;top:396px;">Minor X(in)</div>
<div class="a" style="left:100px;top:394px;width:275px;height:19px;background:#fff;border:1px solid #666"></div>
<div class="t" style="left:104px;top:396px;">0.098</div>
<div class="t" style="left:35px;top:419px;">Minor Y(in)</div>
<div class="a" style="left:100px;top:417px;width:275px;height:19px;background:#fff;border:1px solid #666"></div>
<div class="t" style="left:104px;top:419px;">0.098</div>
<div class="a" style="left:35px;top:441px;width:13px;height:13px;background:#fff;border:1px solid #333"></div>
<div class="t" style="left:53px;top:441px;">Snap to Grid</div>
<div class="a" style="left:35px;top:460px;width:13px;height:13px;background:#fff;border:1px solid #333"></div>
<svg class="a" style="left:37px;top:462px" width="9" height="9" viewBox="0 0 9 9"><path d="M1,4.5 L3.5,7.5 L8,1.5" fill="none" stroke="#111" stroke-width="1.8"/></svg>
<div class="t" style="left:53px;top:460px;">Snap to Construction Geometry</div>
<div class="a" style="left:35px;top:479px;width:13px;height:13px;border-radius:50%;background:#fff;border:1px solid #444"></div>
<div class="t" style="left:53px;top:479px;">Hide Edited Intellishape</div>
<div class="a" style="left:35px;top:498px;width:13px;height:13px;border-radius:50%;background:#fff;border:1px solid #444"></div>
<div class="t" style="left:53px;top:498px;">Hide Edited Part</div>
<div class="a" style="left:35px;top:517px;width:13px;height:13px;border-radius:50%;background:#fff;border:1px solid #444"></div>
<div class="t" style="left:53px;top:517px;">Hide All</div>
<div class="a" style="left:35px;top:536px;width:13px;height:13px;border-radius:50%;background:#fff;border:1px solid #444"></div>
<div class="a" style="left:38px;top:539px;width:7px;height:7px;border-radius:50%;background:#111"></div>
<div class="t" style="left:53px;top:536px;">Display All</div>
<div class="a" style="left:36px;top:555px;width:338px;height:20px;background:#efefef;border:1px solid #d6d6d6"></div>
<div class="t" style="left:168px;top:558px;color:#8c8c8c">UnderDefined</div>
<div class="a" style="left:32px;top:328px;width:346px;height:249px;border:1px solid #cdcdcd;border-top:none"></div>
<svg class="a" style="left:34px;top:941px" width="18" height="18" viewBox="0 0 18 18"><path d="M9,2 L9,6 M5,9 L13,9 M5,9 L3,13 M13,9 L15,13 M9,6 L9,13" stroke="#5a8ac8" fill="none"/><circle cx="9" cy="3" r="1.6" fill="#fff" stroke="#3a6ab8"/><circle cx="5" cy="9" r="1.5" fill="#fff" stroke="#3a6ab8"/><circle cx="13" cy="9" r="1.5" fill="#fff" stroke="#3a6ab8"/><circle cx="9" cy="9" r="1.5" fill="#fff" stroke="#3a6ab8"/><circle cx="3" cy="14" r="1.5" fill="#fff" stroke="#3a6ab8"/><circle cx="15" cy="14" r="1.5" fill="#fff" stroke="#3a6ab8"/><circle cx="9" cy="14" r="1.5" fill="#fff" stroke="#3a6ab8"/></svg>
<div class="t" style="left:50px;top:944px;">Scene</div>
<svg class="a" style="left:92px;top:941px" width="17" height="17" viewBox="0 0 17 17"><circle cx="7" cy="7" r="5" fill="#cfe3f7" stroke="#445" stroke-width="1.3"/><path d="M10.5,10.5 L15,15" stroke="#c08020" stroke-width="2.5"/></svg>
<div class="t" style="left:110px;top:944px;">Search</div>
<div class="a" style="left:154px;top:940px;width:78px;height:20px;background:linear-gradient(#fbfbfc,#eef0f3);border:1px solid #b6bac0;border-top:none;border-radius:0 0 2px 2px"></div>
<svg class="a" style="left:157px;top:942px" width="16" height="16" viewBox="0 0 16 16"><rect x="1.5" y="1.5" width="13" height="13" fill="#fff" stroke="#2a3a5a" stroke-width="1"/><rect x="4" y="4" width="6" height="5" fill="#2a4a8a"/><path d="M4,11.5 L12,11.5" stroke="#2a3a5a"/></svg>
<div class="t" style="left:174px;top:944px;">Properties</div>
<div class="a" style="left:4px;top:965px;width:109px;height:20px;background:linear-gradient(#fdf3c8,#fbe7a0);border:1px solid #e6c878"></div>
<svg class="a" style="left:8px;top:968px" width="14" height="14" viewBox="0 0 14 14"><rect x="1" y="1" width="12" height="12" fill="#fff" stroke="#333" stroke-width="1.1"/><rect x="3.5" y="3.5" width="2.5" height="2.5" fill="#333"/><rect x="8" y="3.5" width="2.5" height="2.5" fill="#333"/><rect x="3.5" y="8" width="2.5" height="2.5" fill="#333"/><rect x="8" y="8" width="2.5" height="2.5" fill="#333"/></svg>
<div class="t" style="left:25px;top:968px;color:#3a3a3a">Catalog Browser</div>
<div class="a" style="left:2px;top:372px;width:23px;height:140px;background:linear-gradient(90deg,#f0f1f3,#fbfbfb);border-right:1px solid #c9ccd0"></div>
<div class="a" style="left:7px;top:377px;width:1px;height:1px;background:#8a8a8a"></div>
<div class="a" style="left:10px;top:377px;width:1px;height:1px;background:#8a8a8a"></div>
<div class="a" style="left:13px;top:377px;width:1px;height:1px;background:#8a8a8a"></div>
<div class="a" style="left:16px;top:377px;width:1px;height:1px;background:#8a8a8a"></div>
<div class="a" style="left:19px;top:377px;width:1px;height:1px;background:#8a8a8a"></div>
<div class="a" style="left:0px;top:503px;width:25px;height:9px;background:linear-gradient(90deg,#9aa0a8,#d0d4d8)"></div>
<div class="a" style="left:17px;top:505px;width:0;height:0;border-top:3px solid transparent;border-bottom:3px solid transparent;border-left:4px solid #fff"></div>
<div class="a" style="left:2px;top:515px;width:23px;height:240px;background:linear-gradient(90deg,#f0f1f3,#fbfbfb);border-right:1px solid #c9ccd0"></div>
<div class="a" style="left:7px;top:520px;width:1px;height:1px;background:#8a8a8a"></div>
<div class="a" style="left:10px;top:520px;width:1px;height:1px;background:#8a8a8a"></div>
<div class="a" style="left:13px;top:520px;width:1px;height:1px;background:#8a8a8a"></div>
<div class="a" style="left:16px;top:520px;width:1px;height:1px;background:#8a8a8a"></div>
<div class="a" style="left:19px;top:520px;width:1px;height:1px;background:#8a8a8a"></div>
<div class="a" style="left:0px;top:746px;width:25px;height:9px;background:linear-gradient(90deg,#9aa0a8,#d0d4d8)"></div>
<div class="a" style="left:17px;top:748px;width:0;height:0;border-top:3px solid transparent;border-bottom:3px solid transparent;border-left:4px solid #fff"></div>
<div class="a" style="left:2px;top:758px;width:23px;height:204px;background:linear-gradient(90deg,#f0f1f3,#fbfbfb);border-right:1px solid #c9ccd0"></div>
<div class="a" style="left:7px;top:763px;width:1px;height:1px;background:#8a8a8a"></div>
<div class="a" style="left:10px;top:763px;width:1px;height:1px;background:#8a8a8a"></div>
<div class="a" style="left:13px;top:763px;width:1px;height:1px;background:#8a8a8a"></div>
<div class="a" style="left:16px;top:763px;width:1px;height:1px;background:#8a8a8a"></div>
<div class="a" style="left:19px;top:763px;width:1px;height:1px;background:#8a8a8a"></div>
<div class="a" style="left:0px;top:953px;width:25px;height:9px;background:linear-gradient(90deg,#9aa0a8,#d0d4d8)"></div>
<div class="a" style="left:17px;top:955px;width:0;height:0;border-top:3px solid transparent;border-bottom:3px solid transparent;border-left:4px solid #fff"></div>
<svg class="a" style="left:5px;top:384px" width="17" height="16" viewBox="0 0 17 16"><rect x="3" y="5" width="10" height="9" rx="2" fill="#b8b8b8" stroke="#8a8a8a" stroke-width="0.8"/><rect x="6" y="2" width="9" height="9" rx="1" fill="none" stroke="#8a8a8a" stroke-width="0.8"/></svg>
<svg class="a" style="left:5px;top:406px" width="17" height="16" viewBox="0 0 17 16"><rect x="3" y="5" width="10" height="9" rx="2" fill="#b8b8b8" stroke="#8a8a8a" stroke-width="0.8"/><rect x="6" y="2" width="9" height="9" rx="1" fill="none" stroke="#8a8a8a" stroke-width="0.8"/></svg>
<svg class="a" style="left:5px;top:435px" width="17" height="16" viewBox="0 0 17 16"><rect x="3" y="5" width="10" height="9" rx="2" fill="#b8b8b8" stroke="#8a8a8a" stroke-width="0.8"/><rect x="6" y="2" width="9" height="9" rx="1" fill="none" stroke="#8a8a8a" stroke-width="0.8"/></svg>
<svg class="a" style="left:5px;top:457px" width="17" height="16" viewBox="0 0 17 16"><rect x="3" y="5" width="10" height="9" rx="2" fill="#b8b8b8" stroke="#8a8a8a" stroke-width="0.8"/><rect x="6" y="2" width="9" height="9" rx="1" fill="none" stroke="#8a8a8a" stroke-width="0.8"/></svg>
<svg class="a" style="left:5px;top:479px" width="17" height="16" viewBox="0 0 17 16"><rect x="3" y="5" width="10" height="9" rx="2" fill="#b8b8b8" stroke="#8a8a8a" stroke-width="0.8"/><rect x="6" y="2" width="9" height="9" rx="1" fill="none" stroke="#8a8a8a" stroke-width="0.8"/></svg>
<div class="a" style="left:8px;top:428px;width:12px;height:1px;background:#999"></div>
<svg class="a" style="left:5px;top:525px" width="17" height="16" viewBox="0 0 17 16"><path d="M2,5 L6,1 L15,1 L15,11 L11,15 L2,15Z" fill="#fff" stroke="#2a5aa0" stroke-width="0.9"/><path d="M2,5 L11,5 L11,15 M11,5 L15,1" fill="none" stroke="#2a5aa0" stroke-width="0.9"/><rect x="2" y="5" width="9" height="10" fill="#3a6ab0"/></svg>
<svg class="a" style="left:5px;top:547px" width="17" height="16" viewBox="0 0 17 16"><path d="M2,5 L6,1 L15,1 L15,11 L11,15 L2,15Z" fill="#fff" stroke="#2a5aa0" stroke-width="0.9"/><path d="M2,5 L11,5 L11,15 M11,5 L15,1" fill="none" stroke="#2a5aa0" stroke-width="0.9"/><path d="M2,5 L6,1 L15,1 L11,5Z" fill="#5a8ad0"/></svg>
<svg class="a" style="left:5px;top:569px" width="17" height="16" viewBox="0 0 17 16"><path d="M2,5 L6,1 L15,1 L15,11 L11,15 L2,15Z" fill="#fff" stroke="#2a5aa0" stroke-width="0.9"/><path d="M2,5 L11,5 L11,15 M11,5 L15,1" fill="none" stroke="#2a5aa0" stroke-width="0.9"/><path d="M11,5 L15,1 L15,11 L11,15Z M2,5 L6,1 L6,11 L2,15Z" fill="#3a6ab0"/></svg>
<svg class="a" style="left:5px;top:592px" width="17" height="16" viewBox="0 0 17 16"><path d="M2,5 L6,1 L15,1 L15,11 L11,15 L2,15Z" fill="#fff" stroke="#2a5aa0" stroke-width="0.9"/><path d="M2,5 L11,5 L11,15 M11,5 L15,1" fill="none" stroke="#2a5aa0" stroke-width="0.9"/><path d="M11,5 L15,1 L15,11 L11,15Z" fill="#3a6ab0"/></svg>
<svg class="a" style="left:5px;top:614px" width="17" height="16" viewBox="0 0 17 16"><path d="M2,5 L6,1 L15,1 L15,11 L11,15 L2,15Z" fill="#fff" stroke="#2a5aa0" stroke-width="0.9"/><path d="M2,5 L11,5 L11,15 M11,5 L15,1" fill="none" stroke="#2a5aa0" stroke-width="0.9"/><rect x="6" y="1" width="9" height="10" fill="#3a6ab0"/></svg>
<svg class="a" style="left:5px;top:636px" width="17" height="16" viewBox="0 0 17 16"><path d="M2,5 L6,1 L15,1 L15,11 L11,15 L2,15Z" fill="#fff" stroke="#2a5aa0" stroke-width="0.9"/><path d="M2,5 L11,5 L11,15 M11,5 L15,1" fill="none" stroke="#2a5aa0" stroke-width="0.9"/><path d="M2,15 L6,11 L15,11 L11,15Z" fill="#5a8ad0"/></svg>
<svg class="a" style="left:5px;top:658px" width="17" height="16" viewBox="0 0 17 16"><path d="M3,5 L7,2 L14,4 L14,12 L10,15 L3,13Z" fill="#3a6ab0" stroke="#1a3a70" stroke-width="0.7"/></svg>
<svg class="a" style="left:5px;top:680px" width="17" height="16" viewBox="0 0 17 16"><path d="M3,5 L7,2 L14,4 L14,12 L10,15 L3,13Z" fill="#3a6ab0" stroke="#1a3a70" stroke-width="0.7"/><path d="M3,5 L10,7 L10,15" fill="none" stroke="#fff" stroke-width="0.8"/></svg>
<svg class="a" style="left:5px;top:702px" width="17" height="16" viewBox="0 0 17 16"><path d="M3,5 L7,2 L14,4 L14,12 L10,15 L3,13Z" fill="#3a6ab0" stroke="#1a3a70" stroke-width="0.7"/><path d="M7,2 L14,4 L10,7" fill="#8ab0e0"/></svg>
<svg class="a" style="left:5px;top:724px" width="17" height="16" viewBox="0 0 17 16"><path d="M3,5 L7,2 L14,4 L14,12 L10,15 L3,13Z" fill="#3a6ab0" stroke="#1a3a70" stroke-width="0.7"/><path d="M3,5 L7,2 L7,9 L3,13Z" fill="#fff" stroke="#1a3a70" stroke-width="0.6"/></svg>
<svg class="a" style="left:5px;top:767px" width="17" height="17" viewBox="0 0 17 17"><path d="M2,3 L14,14 M2,3 L2,7 M2,3 L6,3 M14,14 L10,14 M14,14 L14,10" stroke="#8a8a8a" fill="none" stroke-width="1.1"/></svg>
<svg class="a" style="left:5px;top:789px" width="17" height="17" viewBox="0 0 17 17"><rect x="2" y="2" width="12" height="4" fill="#aaa"/><rect x="2" y="6" width="12" height="6" fill="none" stroke="#aaa"/><ellipse cx="8" cy="10" rx="4" ry="2.5" fill="none" stroke="#888" stroke-width="1.2"/></svg>
<svg class="a" style="left:5px;top:812px" width="17" height="17" viewBox="0 0 17 17"><rect x="2" y="2" width="4" height="12" fill="#aaa"/><ellipse cx="10" cy="8" rx="4" ry="2.5" fill="none" stroke="#888" stroke-width="1.2"/></svg>
<svg class="a" style="left:5px;top:835px" width="17" height="17" viewBox="0 0 17 17"><path d="M1,14 L15,14 M3,14 L12,3" stroke="#8a8a8a" fill="none" stroke-width="1.1"/><path d="M10,6 Q14,10 13,14" fill="none" stroke="#8a8a8a"/></svg>
<svg class="a" style="left:5px;top:857px" width="17" height="17" viewBox="0 0 17 17"><circle cx="8" cy="8" r="6.5" fill="#eee" stroke="#8a8a8a" stroke-width="1.1"/><path d="M8,8 L4,4 M4,4 L4,7 M4,4 L7,4" stroke="#8a8a8a" fill="none"/></svg>
<svg class="a" style="left:5px;top:879px" width="17" height="17" viewBox="0 0 17 17"><circle cx="8" cy="8" r="6.5" fill="#eee" stroke="#8a8a8a" stroke-width="1.1"/><path d="M4,4 L12,12" stroke="#8a8a8a"/></svg>
<svg class="a" style="left:5px;top:909px" width="17" height="17" viewBox="0 0 17 17"><path d="M3,15 L3,9 L9,5" fill="none" stroke="#8a8a8a" stroke-width="1.2"/><text x="9" y="8" font-size="7" font-family="Liberation Sans" font-weight="bold" fill="#8a8a8a">A</text></svg>
<svg class="a" style="left:5px;top:931px" width="17" height="17" viewBox="0 0 17 17"><rect x="4" y="1" width="8" height="15" fill="#bbb" stroke="#999" stroke-width="0.6"/><path d="M4,4 L12,4 M4,7 L12,7 M4,10 L12,10" stroke="#eee"/></svg>
<div class="a" style="left:8px;top:901px;width:12px;height:1px;background:#999"></div>

<!-- VIEWPORT -->
<div id="vp" class="a"><svg class="a" style="left:-390px;top:-208px" width="1680" height="1012" viewBox="0 0 1680 1012">
<defs>
<pattern id="mesh" patternUnits="userSpaceOnUse" width="4.85" height="4.85" patternTransform="matrix(1,0.342,-0.0366,1,474,410)">
<rect width="4.85" height="4.85" fill="#25272c"/>
<rect width="4.85" height="0.95" fill="#8b9098"/>
<rect width="0.95" height="4.85" fill="#8b9098"/>
</pattern>
<linearGradient id="rp" x1="0" y1="0" x2="1" y2="1"><stop offset="0" stop-color="#2a2a2a"/><stop offset="1" stop-color="#202020"/></linearGradient>
<linearGradient id="post" x1="0" y1="0" x2="1" y2="0"><stop offset="0" stop-color="#1c1c1c"/><stop offset="0.35" stop-color="#606060"/><stop offset="0.6" stop-color="#3a3a3a"/><stop offset="1" stop-color="#111"/></linearGradient>
<radialGradient id="bolt"><stop offset="0" stop-color="#d8d8d8"/><stop offset="0.5" stop-color="#7a7a7a"/><stop offset="1" stop-color="#151515"/></radialGradient>
</defs>
<polygon points="459,404 463,400 790,271 822,282 820,286 789,298 783,473 783.0,490.7 524,402.1" fill="#272727" stroke="#0a0a0a" stroke-width="1.3"/>
<polygon points="459,404 463,400 524,402.1 1285,662.4 1290,684.9 463,402.1" fill="#282828" stroke="#0c0c0c" stroke-width="1"/>
<line x1="499" y1="411.5" x2="787" y2="296" stroke="#0a0a0a" stroke-width="1.2"/>
<line x1="527" y1="403" x2="790" y2="300" stroke="#0a0a0a" stroke-width="1.1"/>
<line x1="463" y1="400" x2="521" y2="401.5" stroke="#101010" stroke-width="1.1"/>
<polygon points="760,482 782,474 812.5,486.5 814,489.5 803,498.0 760,483.3" fill="#282828" stroke="#0a0a0a" stroke-width="1"/>
<line x1="768" y1="485" x2="803" y2="495.5" stroke="#0e0e0e" stroke-width="1"/>
<line x1="760" y1="482" x2="782" y2="474" stroke="#8a8a8a" stroke-width="1.3"/>
<path d="M753,488 Q756,485 768,485 L806,496 Q812,499 806,502 Q797,506 786,505 L758,497 Q748,494 753,488Z" fill="none" stroke="#0e0e0e" stroke-width="1"/>
<path d="M965.0,556.6 L1010.0,574.7 Q1015.0,575.7 1012.0,583.7 L965.0,565.6 Q957.0,562.6 965.0,556.6 Z" fill="#2a2a2a" stroke="#0e0e0e" stroke-width="1"/>
<path d="M1164.0,624.6 L1213.0,644.1 Q1218.0,645.1 1215.0,653.1 L1164.0,633.6 Q1156.0,630.6 1164.0,624.6 Z" fill="#2a2a2a" stroke="#0e0e0e" stroke-width="1"/>
<polygon points="1285,663 1586,544 1620,555 1622,565 1614,762 1280,896 1286,690" fill="url(#rp)" stroke="#0e0e0e" stroke-width="1"/>
<polygon points="1285,663 1586,544 1620,555 1622,562 1295,689" fill="#262626" stroke="#0e0e0e" stroke-width="1"/>
<line x1="1289" y1="681" x2="1617" y2="553" stroke="#0c0c0c" stroke-width="1.1"/>
<line x1="1295" y1="690" x2="1621" y2="561" stroke="#7a7a7a" stroke-width="2.6"/>
<line x1="1296" y1="694" x2="1621" y2="566" stroke="#0e0e0e" stroke-width="1"/>
<line x1="1283" y1="890" x2="1612" y2="760" stroke="#3c3c3c" stroke-width="1.2"/>
<polygon points="463,402.1 1290,684.9 1293,687 1279,896 451,612 458,406" fill="#232323" stroke="#0c0c0c" stroke-width="1"/>
<polygon points="1283,686 1296,689 1289,892 1276,891" fill="url(#post)" stroke="#0c0c0c" stroke-width="1"/>
<polygon points="474,410 1269,677 1263,870 467,601" fill="url(#mesh)"/>
<line x1="495" y1="413.3" x2="1288" y2="684.5" stroke="#858585" stroke-width="1.8"/>
<line x1="462" y1="400.7" x2="495" y2="412.0" stroke="#5a5a5a" stroke-width="1.1"/>
<line x1="486" y1="618" x2="1248" y2="879" stroke="#4a4a4a" stroke-width="1.2"/>
<line x1="486" y1="623" x2="1246" y2="882" stroke="#0c0c0c" stroke-width="1"/>
<ellipse cx="521" cy="392" rx="6" ry="3.3" fill="#0c0c0c"/><ellipse cx="521" cy="392" rx="3.5" ry="2" fill="url(#bolt)"/>
<ellipse cx="550" cy="417" rx="6" ry="3.3" fill="#0c0c0c"/><ellipse cx="550" cy="417" rx="3.5" ry="2" fill="url(#bolt)"/>
<ellipse cx="770" cy="293" rx="6" ry="3.3" fill="#0c0c0c"/><ellipse cx="770" cy="293" rx="3.5" ry="2" fill="url(#bolt)"/>
<ellipse cx="797" cy="485" rx="6" ry="3.3" fill="#0c0c0c"/><ellipse cx="797" cy="485" rx="3.5" ry="2" fill="url(#bolt)"/>
<ellipse cx="894" cy="536" rx="6" ry="3.3" fill="#0c0c0c"/><ellipse cx="894" cy="536" rx="3.5" ry="2" fill="url(#bolt)"/>
<ellipse cx="1237" cy="654" rx="6" ry="3.3" fill="#0c0c0c"/><ellipse cx="1237" cy="654" rx="3.5" ry="2" fill="url(#bolt)"/>
<ellipse cx="1307" cy="662" rx="6" ry="3.3" fill="#0c0c0c"/><ellipse cx="1307" cy="662" rx="3.5" ry="2" fill="url(#bolt)"/>
<ellipse cx="1556" cy="564" rx="6" ry="3.3" fill="#0c0c0c"/><ellipse cx="1556" cy="564" rx="3.5" ry="2" fill="url(#bolt)"/>
<polygon points="490.6,434.8 553.9,456.6 551,538.6 485.7,516.9" fill="none" stroke="#fff" stroke-width="2"/>
<polygon points="484.7,532.3 550,553.5 548,613.8 482.7,592" fill="none" stroke="#fff" stroke-width="2"/>
<circle cx="490.6" cy="434.8" r="1.8" fill="#fff"/>
<circle cx="553.9" cy="456.6" r="1.8" fill="#fff"/>
<circle cx="551.0" cy="538.6" r="1.8" fill="#fff"/>
<circle cx="485.7" cy="516.9" r="1.8" fill="#fff"/>
<circle cx="484.7" cy="532.3" r="1.8" fill="#fff"/>
<circle cx="550.0" cy="553.5" r="1.8" fill="#fff"/>
<circle cx="548.0" cy="613.8" r="1.8" fill="#fff"/>
<circle cx="482.7" cy="592.0" r="1.8" fill="#fff"/>
<path d="M492.6,450.2 L502.6,453.2 M497.9,442.7 L497.6,451.7" stroke="#1818b8" stroke-width="2.2"/>
<path d="M540.0,467.0 L550.0,470.0 M545.3,459.5 L545.0,468.5" stroke="#1818b8" stroke-width="2.2"/>
<path d="M491.6,513.5 L501.6,516.5 M496.9,506.0 L496.6,515.0" stroke="#1818b8" stroke-width="2.2"/>
<path d="M536.0,529.3 L546.0,532.3 M541.3,521.8 L541.0,530.8" stroke="#1818b8" stroke-width="2.2"/>
<path d="M486.6,549.0 L496.6,552.0 M491.9,541.5 L491.6,550.5" stroke="#1818b8" stroke-width="2.2"/>
<path d="M534.0,563.9 L544.0,566.9 M539.3,556.4 L539.0,565.4" stroke="#1818b8" stroke-width="2.2"/>
<path d="M486.6,588.5 L496.6,591.5 M491.9,581.0 L491.6,590.0" stroke="#1818b8" stroke-width="2.2"/>
<path d="M535.0,604.5 L545.0,607.5 M540.3,597.0 L540.0,606.0" stroke="#1818b8" stroke-width="2.2"/>
<line x1="518.3" y1="431.9" x2="528.3" y2="434.9" stroke="#1818b8" stroke-width="2.2"/>
<line x1="512.3" y1="535.5" x2="522.3" y2="538.5" stroke="#1818b8" stroke-width="2.2"/>
<line x1="512.3" y1="552.0" x2="522.3" y2="555.0" stroke="#1818b8" stroke-width="2.2"/>
<line x1="511.3" y1="588.5" x2="521.3" y2="591.5" stroke="#1818b8" stroke-width="2.2"/>
<line x1="479.8" y1="466.4" x2="479.8" y2="474.4" stroke="#1818b8" stroke-width="2.2"/>
<line x1="561.8" y1="497.0" x2="561.8" y2="505.0" stroke="#1818b8" stroke-width="2.2"/>
<line x1="492.6" y1="561.3" x2="492.6" y2="569.3" stroke="#1818b8" stroke-width="2.2"/>
<line x1="539.0" y1="576.0" x2="539.0" y2="584.0" stroke="#1818b8" stroke-width="2.2"/>
<line x1="410" y1="483" x2="1325" y2="797" stroke="#d01a1e" stroke-width="1.3" stroke-dasharray="26,4,3,4"/>
<ellipse cx="0" cy="0" rx="1" ry="1" transform="matrix(50,16.5,-2.2,60.5,656.0,573.0)" fill="none" stroke="#fff" stroke-width="0.036"/>
<circle cx="656.0" cy="573.0" r="1.4" fill="#fff"/>
<circle cx="606.0" cy="556.0" r="1.6" fill="#fff"/><circle cx="706.0" cy="590.0" r="1.6" fill="#fff"/>
<circle cx="658.0" cy="501.0" r="4.8" fill="none" stroke="#fff" stroke-width="1.8"/><circle cx="658.0" cy="501.0" r="1.4" fill="#fff"/>
<circle cx="652.0" cy="643.0" r="4.8" fill="none" stroke="#fff" stroke-width="1.8"/><circle cx="652.0" cy="643.0" r="1.4" fill="#fff"/>
<ellipse cx="0" cy="0" rx="1" ry="1" transform="matrix(50,16.5,-2.2,60.5,766.4,611.0)" fill="none" stroke="#fff" stroke-width="0.036"/>
<circle cx="766.4" cy="611.0" r="1.4" fill="#fff"/>
<circle cx="716.4" cy="594.0" r="1.6" fill="#fff"/><circle cx="816.4" cy="628.0" r="1.6" fill="#fff"/>
<circle cx="768.4" cy="539.0" r="4.8" fill="none" stroke="#fff" stroke-width="1.8"/><circle cx="768.4" cy="539.0" r="1.4" fill="#fff"/>
<circle cx="762.4" cy="681.0" r="4.8" fill="none" stroke="#fff" stroke-width="1.8"/><circle cx="762.4" cy="681.0" r="1.4" fill="#fff"/>
<ellipse cx="0" cy="0" rx="1" ry="1" transform="matrix(50,16.5,-2.2,60.5,876.8,649.0)" fill="none" stroke="#fff" stroke-width="0.036"/>
<circle cx="876.8" cy="649.0" r="1.4" fill="#fff"/>
<circle cx="826.8" cy="632.0" r="1.6" fill="#fff"/><circle cx="926.8" cy="666.0" r="1.6" fill="#fff"/>
<circle cx="878.8" cy="577.0" r="4.8" fill="none" stroke="#fff" stroke-width="1.8"/><circle cx="878.8" cy="577.0" r="1.4" fill="#fff"/>
<circle cx="872.8" cy="719.0" r="4.8" fill="none" stroke="#fff" stroke-width="1.8"/><circle cx="872.8" cy="719.0" r="1.4" fill="#fff"/>
<ellipse cx="0" cy="0" rx="1" ry="1" transform="matrix(50,16.5,-2.2,60.5,987.2,687.0)" fill="none" stroke="#fff" stroke-width="0.036"/>
<circle cx="987.2" cy="687.0" r="1.4" fill="#fff"/>
<circle cx="937.2" cy="670.0" r="1.6" fill="#fff"/><circle cx="1037.2" cy="704.0" r="1.6" fill="#fff"/>
<circle cx="989.2" cy="615.0" r="4.8" fill="none" stroke="#fff" stroke-width="1.8"/><circle cx="989.2" cy="615.0" r="1.4" fill="#fff"/>
<circle cx="983.2" cy="757.0" r="4.8" fill="none" stroke="#fff" stroke-width="1.8"/><circle cx="983.2" cy="757.0" r="1.4" fill="#fff"/>
<ellipse cx="0" cy="0" rx="1" ry="1" transform="matrix(50,16.5,-2.2,60.5,1097.6,725.0)" fill="none" stroke="#fff" stroke-width="0.036"/>
<circle cx="1097.6" cy="725.0" r="1.4" fill="#fff"/>
<circle cx="1047.6" cy="708.0" r="1.6" fill="#fff"/><circle cx="1147.6" cy="742.0" r="1.6" fill="#fff"/>
<circle cx="1099.6" cy="653.0" r="4.8" fill="none" stroke="#fff" stroke-width="1.8"/><circle cx="1099.6" cy="653.0" r="1.4" fill="#fff"/>
<circle cx="1093.6" cy="795.0" r="4.8" fill="none" stroke="#fff" stroke-width="1.8"/><circle cx="1093.6" cy="795.0" r="1.4" fill="#fff"/>
<ellipse cx="0" cy="0" rx="1" ry="1" transform="matrix(50,16.5,-2.2,60.5,1208.0,763.0)" fill="none" stroke="#fff" stroke-width="0.036"/>
<circle cx="1208.0" cy="763.0" r="1.4" fill="#fff"/>
<circle cx="1158.0" cy="746.0" r="1.6" fill="#fff"/><circle cx="1258.0" cy="780.0" r="1.6" fill="#fff"/>
<circle cx="1210.0" cy="691.0" r="4.8" fill="none" stroke="#fff" stroke-width="1.8"/><circle cx="1210.0" cy="691.0" r="1.4" fill="#fff"/>
<circle cx="1204.0" cy="833.0" r="4.8" fill="none" stroke="#fff" stroke-width="1.8"/><circle cx="1204.0" cy="833.0" r="1.4" fill="#fff"/>
<circle cx="475" cy="558" r="4.8" fill="none" stroke="#fff" stroke-width="1.8"/><circle cx="475" cy="558" r="1.4" fill="#fff"/>
<circle cx="557" cy="586" r="4.8" fill="none" stroke="#fff" stroke-width="1.8"/><circle cx="557" cy="586" r="1.4" fill="#fff"/>
<line x1="766" y1="493" x2="757" y2="713" stroke="#30d030" stroke-width="1.3"/>
<line x1="762" y1="603" x2="762.5" y2="566" stroke="#28e028" stroke-width="2.6"/>
<polygon points="762,573 757.5,585 766.5,585" fill="#28e028"/>
<path d="M757,550 L762.5,559 L768,550 M762.5,559 L762.5,566" fill="none" stroke="#28e028" stroke-width="1.6"/>
<line x1="732" y1="593" x2="762" y2="603.5" stroke="#ec1010" stroke-width="2.8"/>
<polygon points="735,594 746,593 744,600" fill="#ec1010"/>
<path d="M719,584 L730,597 M729,584 L719,597" stroke="#e01818" stroke-width="1.6"/>
<circle cx="717" cy="590" r="1.3" fill="#fff"/><circle cx="717" cy="594" r="1.3" fill="#fff"/>
<circle cx="1261" cy="871" r="3.5" fill="#f01010"/><line x1="1246" y1="877" x2="1260" y2="872" stroke="#ccc" stroke-width="1"/>
</svg></div>

<!-- STATUS -->
<div id="status" class="a"></div>
<div class="t" style="left:3px;top:991px;font-size:11.4px;color:#2a2a2a">For Help, press F1</div>
<div class="a" style="left:884px;top:987px;width:1px;height:21px;background:#b0b3b7"></div>
<div class="t" style="left:899px;top:991px;color:#333;letter-spacing:-0.35px">X: -1.871 Y: -5.056 Z: 0.000</div>
<div class="t" style="left:1054px;top:991px;color:#333">Units: in, deg</div>
<svg class="a" style="left:1145px;top:989px" width="18" height="18" viewBox="0 0 18 18"><circle cx="7" cy="7" r="5.5" fill="#fff" stroke="#222" stroke-width="1.4"/><rect x="4.5" y="4" width="4" height="5" fill="#fff" stroke="#333" stroke-width="0.8"/><path d="M11,11 L16,16" stroke="#222" stroke-width="2.2"/></svg>
<svg class="a" style="left:1168px;top:989px" width="18" height="18" viewBox="0 0 18 18"><circle cx="7" cy="7" r="5.5" fill="#fff" stroke="#222" stroke-width="1.4"/><rect x="4.5" y="4.5" width="5" height="5" fill="none" stroke="#333" stroke-width="0.8"/><path d="M11,11 L16,16" stroke="#222" stroke-width="2.2"/></svg>
<div class="a" style="left:1191px;top:998px;width:0;height:0;border-left:3px solid transparent;border-right:3px solid transparent;border-top:3px solid #777"></div>
<svg class="a" style="left:1203px;top:990px" width="18" height="16" viewBox="0 0 18 16"><path d="M1,6 L5,3 L13,3 L13,11 L9,14 L1,14Z" fill="#f0d848" stroke="#333" stroke-width="0.9"/><path d="M1,6 L9,6 L9,14 M9,6 L13,3" fill="none" stroke="#333" stroke-width="0.9"/><path d="M15,1 L15,7 M12,4 L18,4 M13,2 L17,6 M17,2 L13,6" stroke="#e01010" stroke-width="1"/></svg>
<div class="a" style="left:1226px;top:998px;width:0;height:0;border-left:3px solid transparent;border-right:3px solid transparent;border-top:3px solid #777"></div>
<svg class="a" style="left:1238px;top:989px" width="18" height="18" viewBox="0 0 18 18"><path d="M1,5 L5,1 L16,1 L16,13 L12,17 L1,17Z" fill="#3a6ab8" stroke="#1a3a78" stroke-width="0.8"/><path d="M1,5 L12,5 L16,1 M12,5 L12,17" fill="none" stroke="#9ac0f0" stroke-width="0.8"/></svg>
<div class="a" style="left:1262px;top:998px;width:0;height:0;border-left:3px solid transparent;border-right:3px solid transparent;border-top:3px solid #777"></div>
<svg class="a" style="left:1273px;top:989px" width="18" height="18" viewBox="0 0 18 18"><rect x="5" y="7" width="10" height="9" fill="#fff" stroke="#333" stroke-width="0.8"/><path d="M1,6 L5,3 L5,9Z M9,1 L12,4 L6,4Z" fill="#2a5aa0"/><rect x="8" y="11" width="5" height="3" fill="#333"/></svg>
<div class="a" style="left:1297px;top:998px;width:0;height:0;border-left:3px solid transparent;border-right:3px solid transparent;border-top:3px solid #777"></div>
<svg class="a" style="left:1308px;top:989px" width="18" height="18" viewBox="0 0 18 18"><path d="M1,8 L11,2 L17,4 L17,10 L7,16 L1,14Z" fill="#4a7ac0" stroke="#1a3a78" stroke-width="0.8"/><path d="M1,8 L7,10 L17,4 M7,10 L7,16" fill="none" stroke="#a0c0f0" stroke-width="0.8"/></svg>
<svg class="a" style="left:1332px;top:989px" width="20" height="18" viewBox="0 0 20 18"><circle cx="5" cy="12" r="4" fill="none" stroke="#333" stroke-width="1.3"/><circle cx="14" cy="12" r="4" fill="none" stroke="#333" stroke-width="1.3"/><path d="M1,12 L4,2 M10,12 L13,2" stroke="#333" stroke-width="1.2"/></svg>
<div class="a" style="left:1352px;top:998px;width:0;height:0;border-left:3px solid transparent;border-right:3px solid transparent;border-top:3px solid #777"></div>
<div class="a" style="left:1362px;top:990px;width:31px;height:18px;background:linear-gradient(#fdecb0,#fbd98a);border:1px solid #e2b44d;border-radius:2px"></div>
<svg class="a" style="left:1365px;top:991px" width="18" height="17" viewBox="0 0 18 17"><path d="M1,5 L5,1 L16,1 L16,12 L12,16 L1,16Z" fill="#a9c8ee" stroke="#333" stroke-width="0.9"/><path d="M1,5 L12,5 L16,1 M12,5 L12,16" fill="none" stroke="#333" stroke-width="0.9"/></svg>
<div class="a" style="left:1384px;top:998px;width:0;height:0;border-left:3px solid transparent;border-right:3px solid transparent;border-top:3px solid #555"></div>
<svg class="a" style="left:1398px;top:989px" width="20" height="18" viewBox="0 0 20 18"><path d="M2,8 L6,4 L16,4 L16,12 L12,16 L2,16Z" fill="#3a6ab8" stroke="#1a3a78"/><path d="M6,4 L10,1 L19,1 L19,8 L16,11" fill="#5a8ad0" stroke="#1a3a78"/><path d="M2,8 L12,8 L16,4 M12,8 L12,16" fill="none" stroke="#a0c0f0" stroke-width="0.8"/></svg>
<div class="a" style="left:1419px;top:998px;width:0;height:0;border-left:3px solid transparent;border-right:3px solid transparent;border-top:3px solid #777"></div>
<svg class="a" style="left:1430px;top:990px" width="18" height="17" viewBox="0 0 18 17"><path d="M2,8 Q2,3 8,3 L11,3 L11,1 L15,5 L11,9 L11,7 L8,7 Q6,7 6,10 L6,14 L2,14Z" fill="#b0b0b0"/><path d="M9,8 L9,16 L11,14 L13,17 L14,16 L12,13 L15,13Z" fill="#fff" stroke="#999" stroke-width="0.8"/></svg>
<div class="a" style="left:1452px;top:990px;width:23px;height:18px;background:linear-gradient(#fdecb0,#fbd98a);border:1px solid #e2b44d;border-radius:2px"></div>
<svg class="a" style="left:1457px;top:991px" width="14" height="17" viewBox="0 0 14 17"><path d="M2,1 L2,14 L5,11 L8,16 L10,15 L7,10 L11,10Z" fill="#fff" stroke="#111" stroke-width="1"/></svg>
<svg class="a" style="left:1480px;top:991px" width="16" height="17" viewBox="0 0 16 17"><rect x="1" y="2" width="8" height="6" fill="#fff" stroke="#bbb" stroke-width="0.8"/><path d="M5,4 L5,15 L7.5,12.5 L10,16 L11.5,15 L9,11.5 L12,11.5Z" fill="#fff" stroke="#111" stroke-width="0.9"/></svg>
<div class="a" style="left:1500px;top:990px;width:87px;height:18px;background:#fff"></div>
<div class="t" style="left:1502px;top:992px;color:#222">Any</div>
<div class="a" style="left:1578px;top:997px;width:0;height:0;border-left:3px solid transparent;border-right:3px solid transparent;border-top:3px solid #666"></div>
<div class="a" style="left:1590px;top:990px;width:63px;height:18px;background:#fff"></div>
<div class="t" style="left:1592px;top:992px;color:#222">uk hydra</div>
<div class="a" style="left:1644px;top:997px;width:0;height:0;border-left:3px solid transparent;border-right:3px solid transparent;border-top:3px solid #666"></div>
<svg class="a" style="left:1657px;top:989px" width="21" height="18" viewBox="0 0 21 18"><rect x="7" y="1" width="7" height="5" fill="#c01830" stroke="#333" stroke-width="0.6"/><path d="M10.5,6 L10.5,9 M4.5,9 L16.5,9 M4.5,9 L4.5,11 M16.5,9 L16.5,11" stroke="#333"/><rect x="1" y="11" width="7" height="5" fill="#3a7ad0" stroke="#333" stroke-width="0.6"/><rect x="13" y="11" width="7" height="5" fill="#3a7ad0" stroke="#333" stroke-width="0.6"/></svg>
<div class="a" style="left:0;top:1009px;width:1680px;height:3px;background:#6a6c70"></div>
<div class="a" style="left:52px;top:1010px;width:55px;height:2px;background:#d8dadd"></div>
<div class="a" style="left:110px;top:1010px;width:55px;height:2px;background:#d8dadd"></div>
<div class="a" style="left:168px;top:1010px;width:55px;height:2px;background:#c9a0a0"></div>
<div class="a" style="left:226px;top:1010px;width:55px;height:2px;background:#d8dadd"></div>
<div class="a" style="left:284px;top:1010px;width:55px;height:2px;background:#d8dadd"></div>
<div class="a" style="left:342px;top:1010px;width:55px;height:2px;background:#d8dadd"></div>
<div class="a" style="left:400px;top:1010px;width:55px;height:2px;background:#d8dadd"></div>
<div class="a" style="left:458px;top:1010px;width:55px;height:2px;background:#d8dadd"></div>
<div class="a" style="left:516px;top:1010px;width:55px;height:2px;background:#d8dadd"></div>
<div class="a" style="left:574px;top:1010px;width:55px;height:2px;background:#d8dadd"></div>
<div class="a" style="left:632px;top:1010px;width:55px;height:2px;background:#d8dadd"></div>
<svg class="a" style="left:400px;top:890px" width="56" height="40" viewBox="0 0 56 40"><text x="5" y="30" font-size="9" font-family="Liberation Sans" fill="#d02020">X</text><text x="24" y="11" font-size="9" font-family="Liberation Sans" fill="#40c040">Y</text><text x="43" y="29" font-size="9" font-family="Liberation Sans" fill="#1a1aa0">Z</text><path d="M27,35 L27,17" stroke="#30b030" stroke-width="2.5"/><path d="M24,22 L27,15 L30,22Z" fill="#208020"/><path d="M27,35 L13,29" stroke="#c02020" stroke-width="3"/><path d="M27,35 L39,30" stroke="#2030b0" stroke-width="3"/></svg>

</body></html>
